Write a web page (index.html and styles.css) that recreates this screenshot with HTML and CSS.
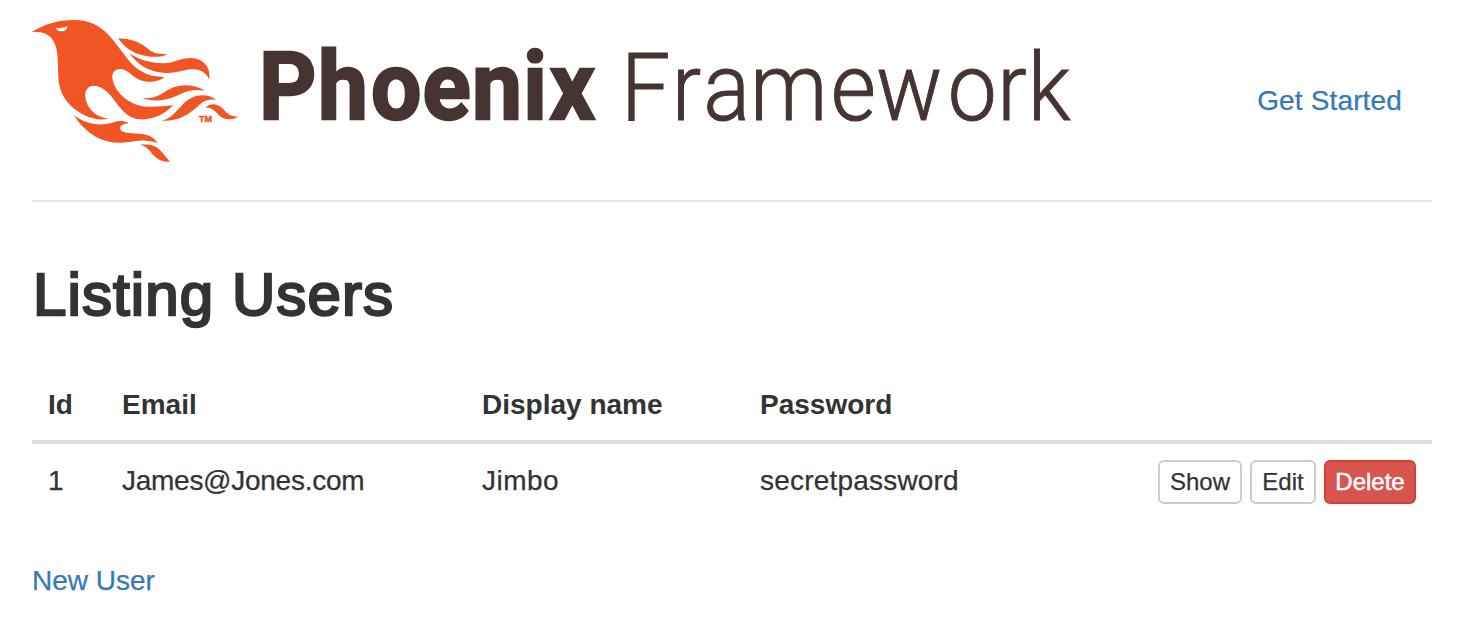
FILE: index.html
```html
<!DOCTYPE html>
<html lang="en">
<head>
<meta charset="utf-8">
<title>Listing Users</title>
<link rel="stylesheet" href="styles.css">
</head>
<body>
<div class="container">
  <header class="header">
    <svg class="logo" viewBox="0 0 1060 160" role="img" aria-label="Phoenix Framework">
      <g class="bird" transform="scale(.33333)">
        <path fill-rule="evenodd" d="M24 66C60 43 100 30 150 30C220 29 255 72 288 117C325 168 350 199 421 201C410 212 390 216 370 215C325 210 320 180 290 177C270 177 262 190 266 210C275 250 320 289 370 290C400 291 425 288 447 285C425 312 385 330 350 328C280 325 270 230 210 227C190 227 182 243 184 262C188 295 215 322 253 326C235 331 205 328 180 315C130 288 104 250 103 200C100 145 105 110 80 82C65 66 45 65 24 66ZM96 53C108 56 120 53 131 49C129 58 123 64 113 64C103 64 98 60 96 53Z"/>
        <path d="M283 86C310 84 345 94 370 115C388 131 405 134 430 131C420 139 400 142 380 140C330 134 307 117 283 86Z"/>
        <path d="M315 129C345 150 390 163 430 159C460 155 470 144 500 144C540 146 560 170 556 208C545 185 525 175 500 178C470 182 455 190 425 189C370 187 340 160 315 129Z"/>
        <path d="M353 263C385 268 405 258 425 244C460 220 505 220 543 242C515 238 495 240 470 252C430 273 390 277 353 263Z"/>
        <path d="M413 332C440 327 455 305 475 285C505 252 545 248 577 269C550 267 540 272 520 290C490 318 455 335 413 332Z"/>
        <path d="M545 292C560 278 580 280 597 296C612 314 622 319 643 320C625 330 605 330 590 320C572 305 568 294 545 292Z"/>
        <path d="M149 315C175 335 205 345 240 343C270 340 285 325 314 339C300 342 288 345 288 355C292 370 315 370 345 371C370 372 390 380 401 399C380 392 360 389 335 393C290 402 250 400 215 380C185 362 165 340 149 315Z"/>
        <path d="M348 404C370 402 392 403 408 420C422 436 430 445 438 456C410 455 395 445 382 428C372 415 362 407 348 404Z"/>
        <text class="tm" x="525" y="336" textLength="39" lengthAdjust="spacingAndGlyphs">TM</text>
      </g>
      <text class="name-bold" transform="scale(.95 1)" y="109.5" x="247.4 309.5 365.4 419.6 471.5 525.5 553.2">Phoenix</text>
      <text class="name-light" transform="scale(.92 1)" y="110" x="649 704 738.4 789 877 926.3 1004 1058 1091">Framework</text>
    </svg>
    <a class="link nav-link" href="#">Get Started</a>
  </header>
  <h1 class="title">Listing Users</h1>
  <table class="users">
    <thead>
      <tr><th class="col-id">Id</th><th class="col-email">Email</th><th class="col-name">Display name</th><th class="col-pass">Password</th><th></th></tr>
    </thead>
    <tbody>
      <tr>
        <td>1</td><td class="email">James@Jones.com</td><td class="name">Jimbo</td><td class="pass">secretpassword</td>
        <td class="action-cell"><div class="actions"><a class="btn btn-show" href="#">Show</a><a class="btn btn-edit" href="#">Edit</a><a class="btn btn-danger" href="#">Delete</a></div></td>
      </tr>
    </tbody>
  </table>
  <a class="link new-user" href="#">New User</a>
</div>
</body>
</html>
```
FILE: styles.css
```css
* { box-sizing: border-box; }
body {
  margin: 0;
  background: #fff;
  color: #333;
  font: 28px/40px "Liberation Sans", Arial, sans-serif;
}
.container { width: 1400px; margin-left: 32px; }
.header {
  display: flex;
  justify-content: space-between;
  height: 202px;
  padding: 10px 30px 0 0;
  border-bottom: 2px solid #e5e5e5;
}
.logo { width: 1060px; height: 160px; margin-left: -8px; }
.bird { fill: #f15524; }
.tm { font: bold 28px "Liberation Sans", sans-serif; stroke: #f15524; stroke-width: 1.5px; }
.name-bold { font: 700 94px Roboto, sans-serif; fill: #463433; stroke: #463433; stroke-width: 2.4px; }
.name-light { font: 300 95px Roboto, sans-serif; fill: #463433; stroke: #463433; stroke-width: 1px; }
.link { color: #337ab7; text-decoration: none; -webkit-text-stroke: .25px; }
.nav-link { margin-top: 71px; letter-spacing: .15px; }
.title {
  margin: 60px 0 0 1px;
  font-size: 60px;
  font-weight: 400;
  line-height: 66px;
  letter-spacing: 1.1px;
  -webkit-text-stroke: 2.4px #333;
}
.users {
  width: 100%;
  margin-top: 40px;
  border-collapse: separate;
  border-spacing: 0;
  table-layout: fixed;
}
.users th, .users td { padding: 17px 16px 15px; text-align: left; vertical-align: top; }
.users td { -webkit-text-stroke: .25px; }
.users th { height: 76px; border-bottom: 4px solid #ddd; }
.users .action-cell { padding: 16px; }
.col-id { width: 74px; }
.col-email { width: 360px; }
.col-name { width: 278px; }
.col-pass { width: 266px; }
.email { letter-spacing: -.27px; }
.name { letter-spacing: .5px; }
.pass { letter-spacing: .2px; }
.actions { display: flex; justify-content: flex-end; gap: 8px; }
.btn {
  height: 44px;
  border: 2px solid #ccc;
  border-radius: 6px;
  color: #333;
  font-size: 24px;
  line-height: 39px;
  text-align: center;
  text-decoration: none;
}
.btn-show { width: 84px; }
.btn-edit { width: 66px; }
.btn-danger { width: 92px; background: #d9534f; border-color: #d43f3a; color: #fff; -webkit-text-stroke: .5px #fff; }
.new-user { display: block; margin-top: 41px; }
```
